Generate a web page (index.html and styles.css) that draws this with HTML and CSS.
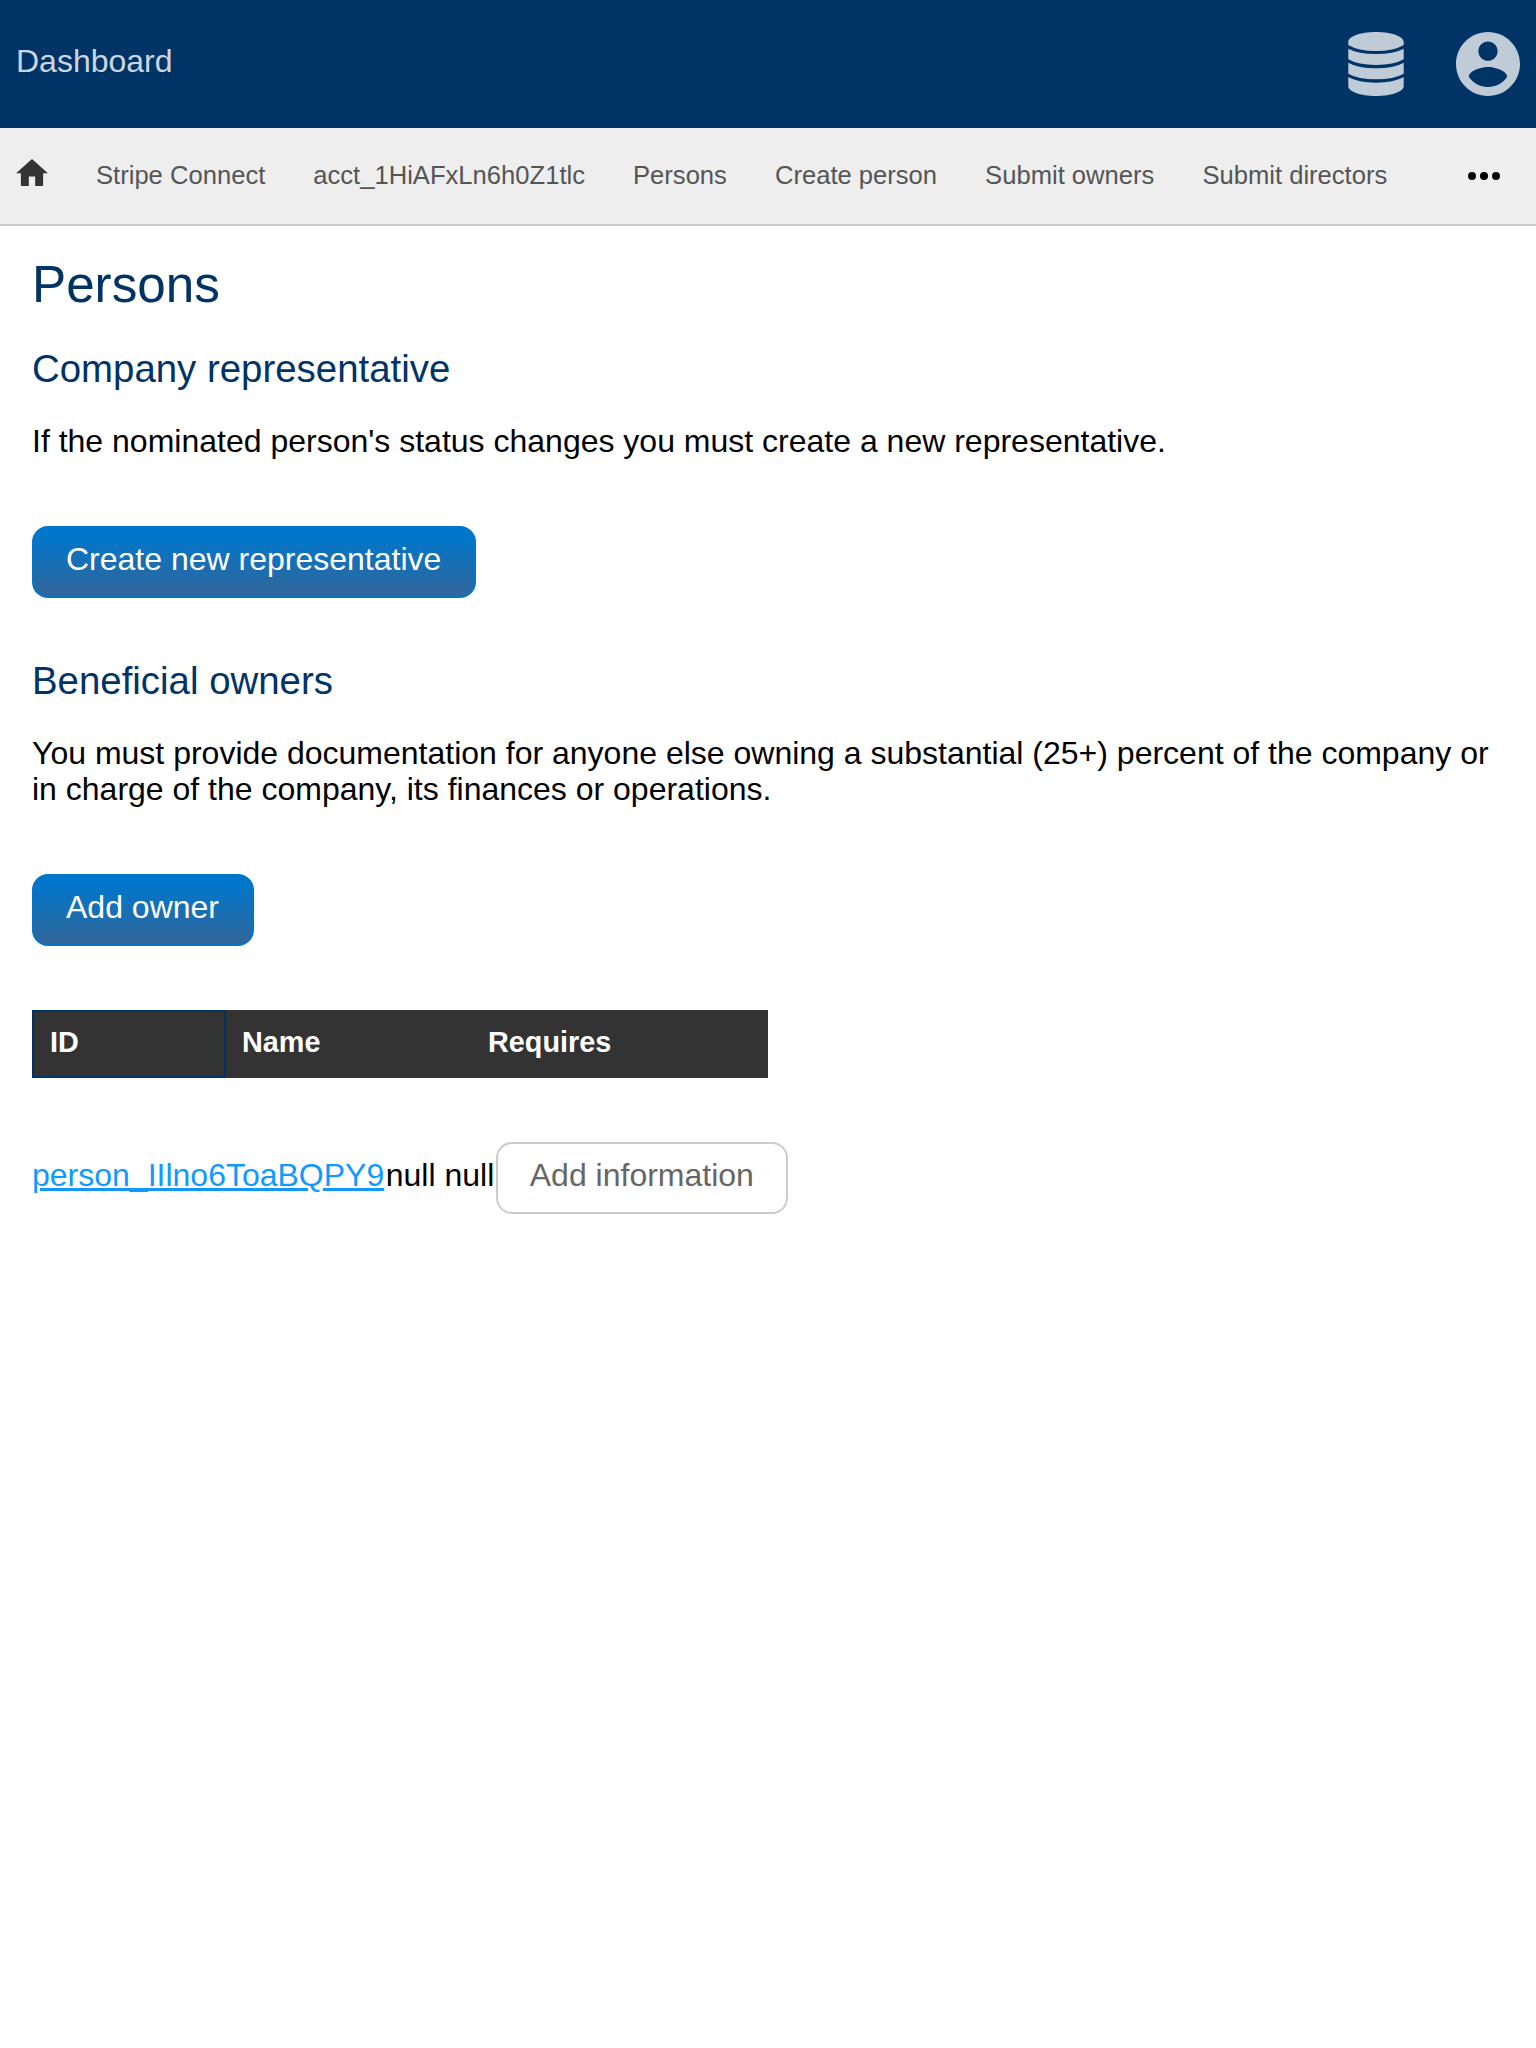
FILE: index.html
```html
<!DOCTYPE html>
<html lang="en">
<head>
<meta charset="utf-8">
<title>Persons</title>
<link rel="stylesheet" href="styles.css">
</head>
<body>
<header class="header">
  <a class="brand">Dashboard</a>
  <div class="menus">
    <svg class="icon-db" viewBox="0 0 56 64"><path d="M.3 10C.3 4.500 12 0 28 0s27.700 4.500 27.700 10v3Q46 19 28 19T.3 13zM.3 16.700Q10 22 28 22t27.700-5.300v10.600Q46 33 28 33T.3 27.300zM.3 30.700Q10 36.300 28 36.300t27.700-5.600v11Q46 47.300 28 47.300T.3 41.700zM.3 45Q10 50.700 28 50.700T55.700 45v9c0 5.500-11.700 10-27.700 10S.3 59.500.3 54z"/></svg>
    <svg class="icon-user" viewBox="2 2 20 20"><path d="M12 2C6.480 2 2 6.480 2 12s4.480 10 10 10 10-4.480 10-10S17.520 2 12 2zm0 3c1.660 0 3 1.340 3 3s-1.340 3-3 3-3-1.340-3-3 1.340-3 3-3zm0 14.200c-2.500 0-4.710-1.280-6-3.220.030-1.990 4-3.080 6-3.080 1.990 0 5.970 1.090 6 3.080-1.290 1.940-3.500 3.220-6 3.220z"/></svg>
  </div>
</header>
<nav class="nav">
  <svg class="icon-home" viewBox="2 3 20 17"><path d="M10 20v-6h4v6h5v-8h3L12 3 2 12h3v8z"/></svg>
  <a>Stripe Connect</a>
  <a>acct_1HiAFxLn6h0Z1tlc</a>
  <a>Persons</a>
  <a>Create person</a>
  <a>Submit owners</a>
  <a>Submit directors</a>
  <svg class="icon-more" viewBox="0 0 32 8"><circle cx="4" cy="4" r="4"/><circle cx="16" cy="4" r="4"/><circle cx="28" cy="4" r="4"/></svg>
</nav>
<main class="content">
  <h1>Persons</h1>
  <h2>Company representative</h2>
  <p>If the nominated person's status changes you must create a new representative.</p>
  <a class="button primary">Create new representative</a>
  <h2 class="section">Beneficial owners</h2>
  <p>You must provide documentation for anyone else owning a substantial (25+) percent of the company or in charge of the company, its finances or operations.</p>
  <a class="button primary">Add owner</a>
  <div class="table-head">
    <div class="cell sorted">ID</div>
    <div class="cell">Name</div>
    <div class="cell">Requires</div>
  </div>
  <div class="person"><a class="link">person_IIlno6ToaBQPY9</a><span>null null</span><a class="button">Add information</a></div>
</main>
</body>
</html>
```

FILE: styles.css
```css
* { box-sizing: border-box; }
body {
  margin: 0;
  background: #fff;
  color: #000;
  font: 32px/36px "Liberation Sans", Arial, sans-serif;
}
svg { display: block; flex: none; }
.header {
  display: flex;
  justify-content: space-between;
  height: 128px;
  padding: 32px 16px;
  background: #003366;
}
.brand { padding-top: 11px; color: #ccd6e0; }
.menus { display: flex; gap: 52px; fill: #c0cbd8; }
.icon-db { width: 56px; height: 64px; }
.icon-user { width: 64px; height: 64px; }
.nav {
  display: flex;
  gap: 48px;
  height: 98px;
  padding: 33px 36px 0 16px;
  background: #eee;
  border-bottom: 2px solid #ccc;
  color: #555;
  font-size: 25.6px;
  line-height: 28px;
  white-space: nowrap;
}
.icon-home { width: 32px; height: 27px; margin-top: -2px; fill: #333; }
.icon-more { width: 32px; height: 8px; margin: 11px 0 0 auto; fill: #000; }
.content {
  display: flex;
  flex-direction: column;
  align-items: flex-start;
  padding: 30px 32px;
}
h1, h2, p { margin: 0; font-weight: 400; }
h1, h2 { color: #003366; }
h1 { font-size: 51.2px; line-height: 57px; }
h2 { margin: 34px 0 33px; font-size: 38.4px; line-height: 43px; }
.section { margin-top: 61px; }
p { margin-bottom: 67px; }
.button {
  display: block;
  height: 72px;
  padding: 13px 32px 0;
  border: 2px solid #ccc;
  border-radius: 16px;
  color: #666;
  white-space: nowrap;
}
.primary {
  padding-right: 33px;
  border-color: #0077cc;
  background: linear-gradient(#0077cc 10%, #336699);
  color: #fff;
}
.table-head {
  display: grid;
  grid-template-columns: 194px 246px 296px;
  margin: 64px 0;
  background: #333;
  color: #fff;
  font-size: 28.8px;
  font-weight: 700;
  line-height: 32px;
}
.cell { height: 68px; padding: 16px; }
.sorted { padding: 14px 16px; border: 2px solid #003366; }
.person { display: flex; gap: 1.5px; line-height: 36px; }
.person .link, .person span { padding-top: 15px; }
.link { color: #1199ff; text-decoration: underline; }
```
